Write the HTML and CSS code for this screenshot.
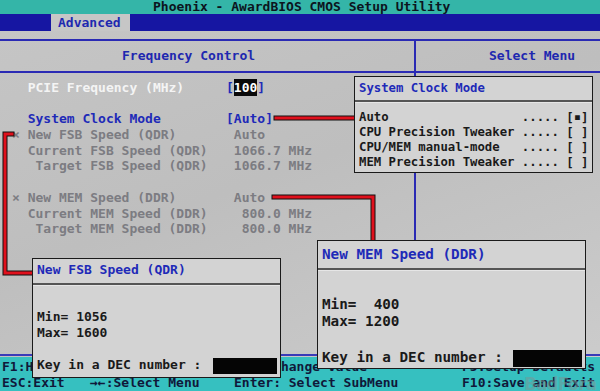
FILE: index.html
```html
<!DOCTYPE html>
<html lang="en">
<head>
    <meta charset="UTF-8">
    <meta name="viewport" content="width=device-width, initial-scale=1.0">
    <title>Phoenix - AwardBIOS CMOS Setup Utility</title>
    <link rel="stylesheet" href="styles.css">
</head>
<body>
    <div class="screen">
        <header class="title-bar">Phoenix - AwardBIOS CMOS Setup Utility</header>
        <nav class="menu-bar"><span class="tab">Advanced</span></nav>

        <main class="frame">
            <section class="col-left">
                <h2 class="col-head head-left">Frequency Control</h2>
                <div class="items">
                    <div class="row white"><span class="label">  PCIE Frequency (MHz)</span><span class="value"><span class="blue">[</span><span class="hl">100</span><span class="blue">]</span></span></div>
                    <div class="row"></div>
                    <div class="row blue"><span class="label">  System Clock Mode</span><span class="value">[Auto]</span></div>
                    <div class="row dim"><span class="label">× New FSB Speed (QDR)</span><span class="value"> Auto</span></div>
                    <div class="row dim"><span class="label">  Current FSB Speed (QDR)</span><span class="value"> 1066.7 MHz</span></div>
                    <div class="row dim"><span class="label">   Target FSB Speed (QDR)</span><span class="value"> 1066.7 MHz</span></div>
                    <div class="row"></div>
                    <div class="row dim"><span class="label">× New MEM Speed (DDR)</span><span class="value"> Auto</span></div>
                    <div class="row dim"><span class="label">  Current MEM Speed (DDR)</span><span class="value">  800.0 MHz</span></div>
                    <div class="row dim"><span class="label">   Target MEM Speed (DDR)</span><span class="value">  800.0 MHz</span></div>
                </div>
            </section>
            <section class="col-right">
                <h2 class="col-head head-right">Select Menu</h2>
            </section>
        </main>

        <footer class="keys">
            <span>F1:Help</span>
            <span>↑↓:Select Item</span>
            <span> -/+:Change Value</span>
            <span>F5:Setup Defaults</span>
            <span>ESC:Exit</span>
            <span>→←:Select Menu</span>
            <span>Enter: Select SubMenu</span>
            <span>F10:Save and Exit</span>
        </footer>

        <!-- red call-out lines -->
        <svg class="links" width="600" height="391" viewBox="0 0 600 391">
            <g fill="none" stroke="#111" stroke-width="5" stroke-linecap="square">
                <path d="M276 118 H353"/>
                <path d="M274 197 H373 V239"/>
                <path d="M12 134 H5 V273 H31"/>
            </g>
            <g fill="none" stroke="#e0101c" stroke-width="3" stroke-linecap="square">
                <path d="M276 118 H353"/>
                <path d="M274 197 H373 V239"/>
                <path d="M12 134 H5 V273 H31"/>
            </g>
        </svg>

        <div class="popup pop-mode">
            <div class="pop-title">System Clock Mode</div>
            <div class="pop-body">
                <div class="line">Auto                  ..... [▪]</div>
                <div class="line">CPU Precision Tweaker ..... [ ]</div>
                <div class="line">CPU/MEM manual-mode   ..... [ ]</div>
                <div class="line">MEM Precision Tweaker ..... [ ]</div>
            </div>
        </div>

        <div class="popup pop-fsb">
            <div class="pop-title">New FSB Speed (QDR)</div>
            <div class="pop-body">
                <div class="line">Min= 1056</div>
                <div class="line">Max= 1600</div>
                <div class="line key-row">Key in a DEC number : <span class="entry"></span></div>
            </div>
        </div>

        <div class="popup pop-mem">
            <div class="pop-title">New MEM Speed (DDR)</div>
            <div class="pop-body">
                <div class="line">Min=  400</div>
                <div class="line">Max= 1200</div>
                <div class="line key-row">Key in a DEC number : <span class="entry"></span></div>
            </div>
        </div>

        <div class="watermark">BadFora</div>
    </div>
</body>
</html>
```

FILE: styles.css
```css
body {
    margin: 0;
    background: #c4c4c4;
    font-family: "DejaVu Sans Mono", "Liberation Mono", monospace;
    font-weight: bold;
    font-size: 13px;
    overflow: hidden;
}

.screen {
    position: relative;
    width: 600px;
    height: 391px;
    display: flex;
    flex-direction: column;
    overflow: hidden;
    background: linear-gradient(160deg, #c6c6c6 0%, #bebebe 45%, #cdcdcd 100%);
}

.title-bar {
    height: 14px;
    line-height: 14px;
    padding-left: 153px;
    background: #34b5a8;
    color: #0c1420;
    white-space: pre;
}

.menu-bar {
    height: 17px;
    display: flex;
    background: #1616a2;
}

.tab {
    margin-left: 51px;
    width: 72px;
    padding-left: 7px;
    line-height: 17px;
    background: #c6c6c6;
    color: #1e28b0;
}

.frame {
    margin-top: 8px;
    height: 313px;
    display: grid;
    grid-template-columns: 416px 1fr;
    border-top: 2px solid #2a2ab4;
    border-bottom: 2px solid #3a3ab8;
}

.col-left {
    border-right: 2px solid #2a2ab4;
}

.col-head {
    margin: 0;
    height: 30px;
    line-height: 30px;
    font-size: 13px;
    color: #1e28b0;
    border-bottom: 2px solid #2a2ab4;
}

.head-left {
    padding-left: 122px;
}

.head-right {
    padding-left: 73px;
}

.items {
    padding: 7px 0 0 12px;
}

.row {
    display: flex;
    height: 15.7px;
    line-height: 15.7px;
}

.label,
.value,
.line,
.keys span {
    white-space: pre;
}

.label {
    width: 214px;
}

.white {
    color: #f4f4f4;
}

.blue {
    color: #1e2ab8;
}

.dim {
    color: #7c7c82;
}

.hl {
    background: #0a0a0a;
    color: #ffffff;
    padding: 1px 0;
}

.keys {
    margin-top: 1px;
    flex: 1;
    padding: 2px 0 0 2px;
    display: grid;
    grid-template-columns: 88px 144px 228px 1fr;
    grid-auto-rows: 16px;
    line-height: 16px;
    background: #36c0c0;
    color: #10183a;
}

.links {
    position: absolute;
    top: 0;
    left: 0;
    pointer-events: none;
}

.popup {
    position: absolute;
    box-sizing: border-box;
    background: #d3d3d3;
    border: 1px solid #1a1a1a;
    color: #1a1a1a;
}

.pop-title {
    padding-left: 4px;
    color: #1e2ab8;
    border-bottom: 2px solid #555555;
    box-shadow: 0 1px 0 #e6e6e6;
}

.pop-body {
    padding-left: 4px;
}

.entry {
    display: inline-block;
    vertical-align: middle;
    background: #050505;
}

/* System Clock Mode list */
.pop-mode {
    left: 354px;
    top: 76px;
    width: 239px;
    height: 97px;
    font-size: 12.3px;
}

.pop-mode .pop-title {
    height: 23px;
    line-height: 22px;
}

.pop-mode .pop-body {
    padding-top: 8px;
    line-height: 15px;
}

/* FSB entry box */
.pop-fsb {
    left: 32px;
    top: 258px;
    width: 249px;
    height: 120px;
}

.pop-fsb .pop-title {
    height: 24px;
    line-height: 21px;
}

.pop-fsb .pop-body {
    padding-top: 24px;
    line-height: 15.5px;
}

.pop-fsb .key-row {
    margin-top: 17px;
    line-height: 16px;
}

.pop-fsb .entry {
    margin-left: 4px;
    width: 64px;
    height: 16px;
}

/* MEM entry box */
.pop-mem {
    left: 317px;
    top: 240px;
    width: 269px;
    height: 129px;
    font-size: 14.3px;
}

.pop-mem .pop-title {
    height: 27px;
    line-height: 26px;
}

.pop-mem .pop-body {
    padding-top: 26px;
    line-height: 17px;
}

.pop-mem .key-row {
    margin-top: 19px;
}

.pop-mem .entry {
    margin-left: 2px;
    width: 69px;
    height: 17px;
}

.watermark {
    position: absolute;
    right: 4px;
    bottom: -3px;
    font-family: "DejaVu Sans", sans-serif;
    font-size: 17px;
    color: rgba(120, 150, 150, 0.55);
    letter-spacing: -1px;
}
```
